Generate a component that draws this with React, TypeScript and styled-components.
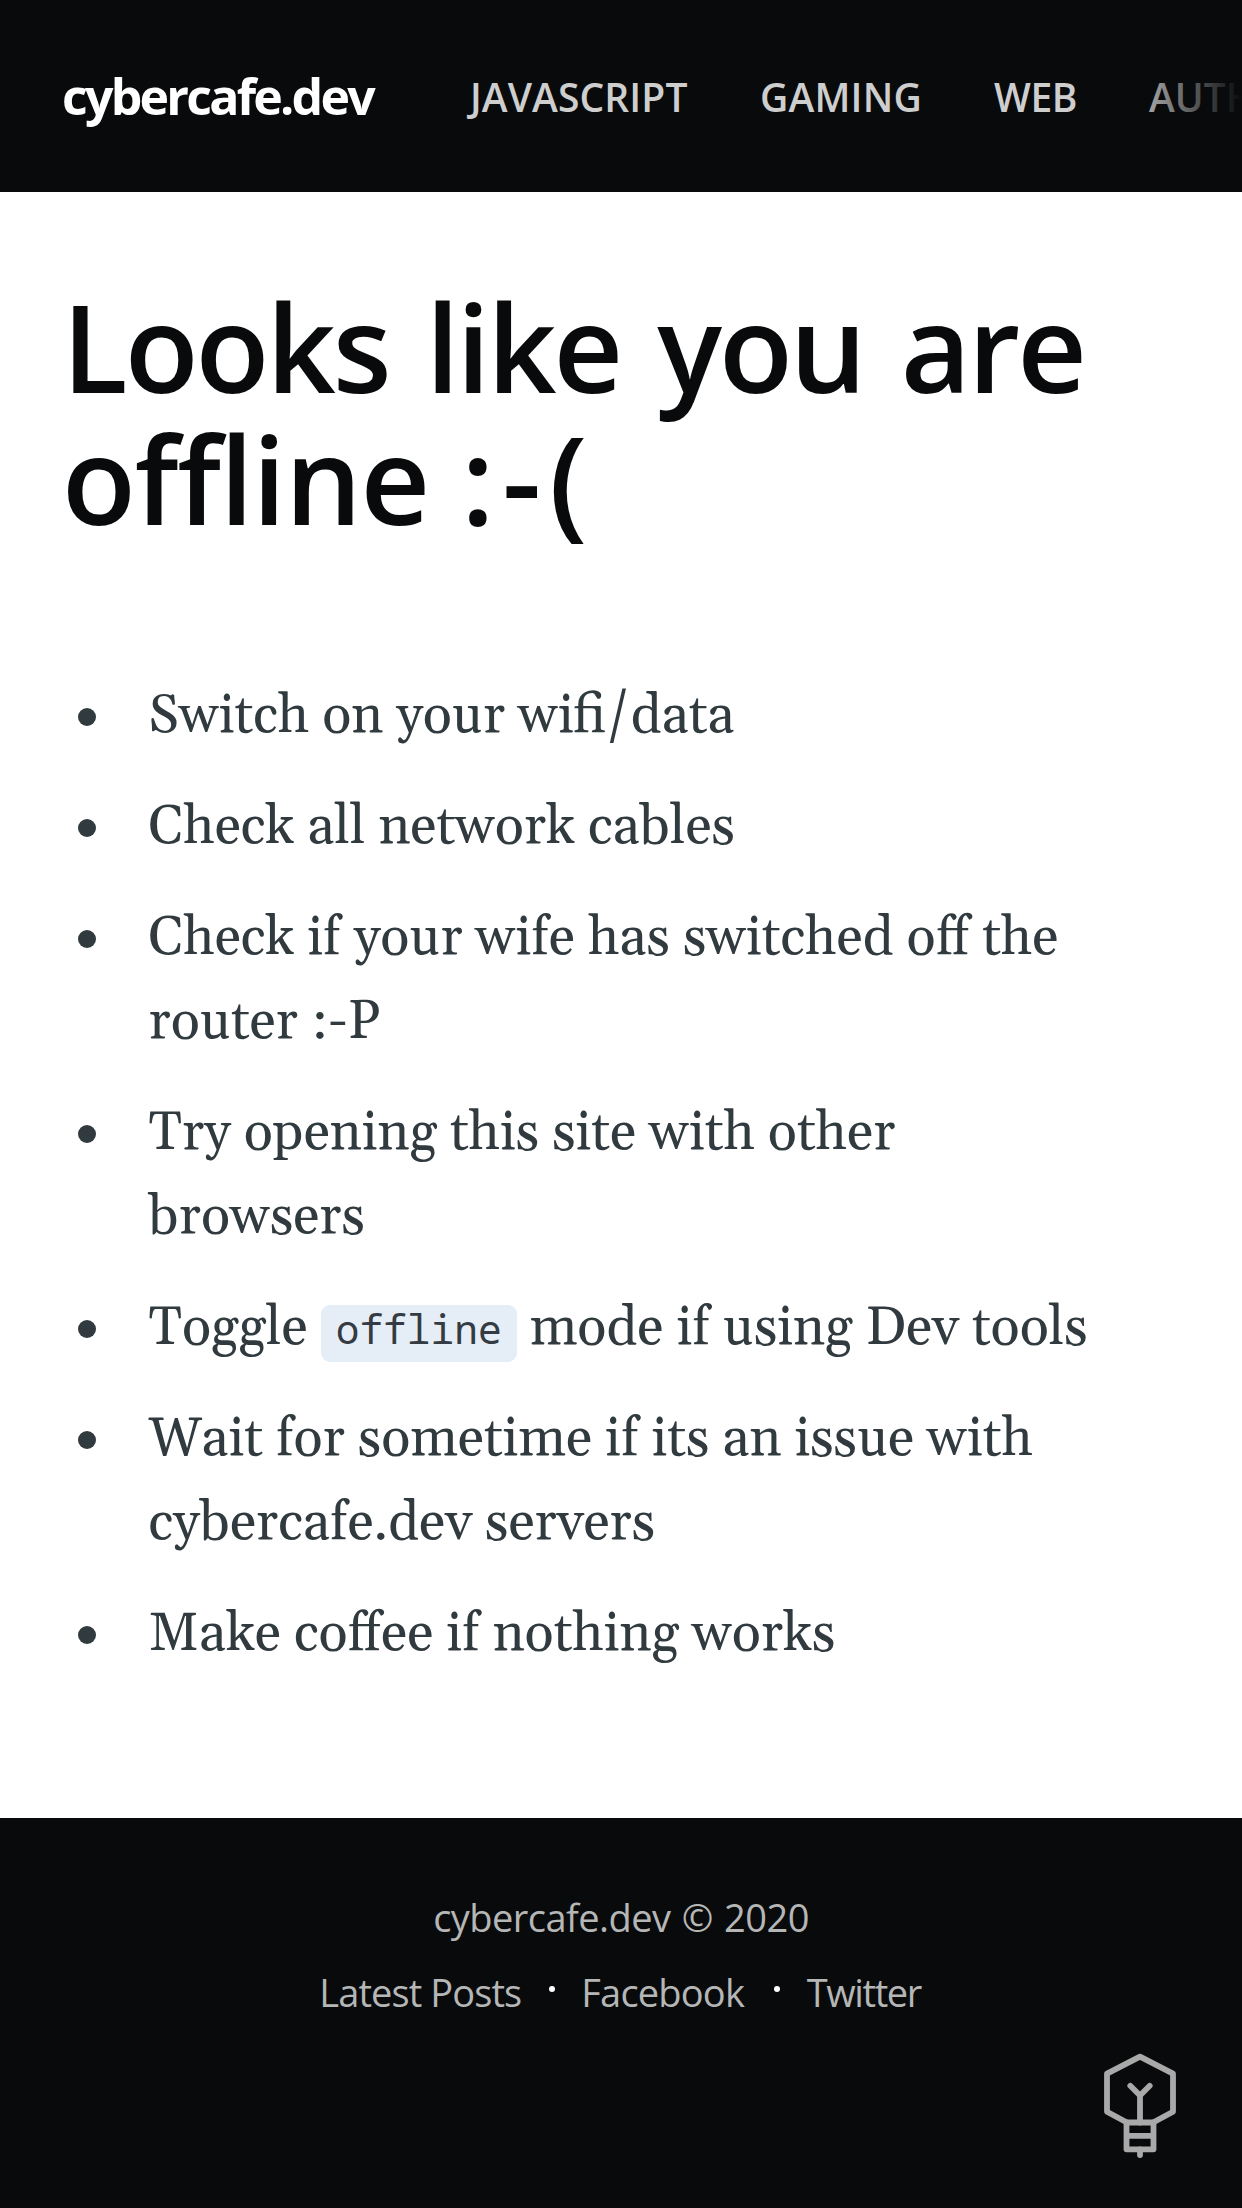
import React from "react";
import styled, { createGlobalStyle } from "styled-components";

const ink = "#090a0b";
const sans = `"Open Sans", "Noto Sans", sans-serif`;
const serif = `Gelasio, Georgia, "Liberation Serif", serif`;
const mono = `"Noto Sans Mono", "DejaVu Sans Mono", monospace`;

const GlobalStyle = createGlobalStyle`
  *, *::before, *::after { box-sizing: border-box; }
  html, body { margin: 0; padding: 0; background: #fff; }
  body { overflow: hidden; }
`;

const Page = styled.div`
  position: relative;
  display: flex;
  flex-direction: column;
  width: 1242px;
  height: 2208px;
  overflow: hidden;
  background: #fff;
  font-family: ${sans};
`;

const Header = styled.header`
  position: relative;
  display: flex;
  align-items: center;
  flex: 0 0 192px;
  padding: 0 0 0 62px;
  overflow: hidden;
  background: ${ink};

  &::after {
    content: "";
    position: absolute;
    top: 0;
    right: 0;
    width: 120px;
    height: 100%;
    background: linear-gradient(to right, rgba(9, 10, 11, 0), ${ink});
  }
`;

const Logo = styled.a`
  flex: 0 0 408px;
  color: #fff;
  font-size: 50px;
  font-weight: 700;
  line-height: 68px;
  letter-spacing: -2.75px;
`;

const Nav = styled.nav`
  display: grid;
  grid-template-columns: 290px 234px 155px auto;
  flex: none;
  padding-top: 1px;
`;

const NavLink = styled.a<{ $track: number }>`
  color: #cecece;
  font-size: 39px;
  font-weight: 650;
  line-height: 54px;
  letter-spacing: ${(p) => p.$track}px;
  text-transform: uppercase;
  white-space: nowrap;
`;

const Main = styled.main`
  flex: 0 0 1626px;
  padding: 88px 62px 0;
`;

const Title = styled.h1`
  margin: 0 0 130px;
  color: ${ink};
  font-size: 121px;
  font-weight: 600;
  line-height: 132px;
`;

const TitleLine = styled.span<{ $track: number; $word: number }>`
  display: block;
  letter-spacing: ${(p) => p.$track}px;
  word-spacing: ${(p) => p.$word}px;
  white-space: nowrap;
`;

const Emoticon = styled.span`
  letter-spacing: 7.8px;
`;

const List = styled.ul`
  display: flex;
  flex-direction: column;
  gap: 27px;
  margin: 0;
  padding: 0;
  list-style: none;
`;

const Item = styled.li`
  display: flex;
  align-items: flex-start;
  color: #313b3f;
  font-family: ${serif};
  font-size: 54px;
  line-height: 84px;

  &::before {
    content: "";
    flex: none;
    width: 18px;
    height: 18px;
    margin: 34px 52.6px 0 16px;
    border-radius: 50%;
    background: #313b3f;
  }
`;

const ItemText = styled.div`
  white-space: nowrap;
`;

const Code = styled.code`
  display: inline-block;
  padding: 0 15px 9px;
  border-radius: 9px;
  background: #e5eef6;
  color: #343b43;
  font-family: ${mono};
  font-size: 39.5px;
  line-height: 48px;
`;

const Footer = styled.footer`
  display: flex;
  flex-direction: column;
  align-items: center;
  flex: 1;
  padding-top: 73px;
  background: ${ink};
`;

const FooterText = styled.span<{ $track: number }>`
  color: #b5b6b6;
  font-size: 38px;
  font-weight: 440;
  line-height: 52px;
  letter-spacing: ${(p) => p.$track}px;
  white-space: nowrap;
`;

const Copyright = styled(FooterText)`
  word-spacing: 2px;
`;

const FooterNav = styled.nav`
  display: grid;
  grid-template-columns: 229.5px 32.5px 192.5px 33px 116px;
  align-items: center;
  margin-top: 23px;
`;

const Dot = styled.i`
  width: 6.5px;
  height: 6.5px;
  margin-bottom: 6px;
  border-radius: 50%;
  background: #fff;
`;

const Bulb = styled.svg`
  position: absolute;
  right: 32px;
  bottom: 28px;
  width: 130px;
  height: 150px;
  fill: none;
  stroke: #a9a9a9;
  stroke-width: 5.8;
  stroke-linecap: round;
  stroke-linejoin: round;
`;

const navItems: [string, number][] = [
  ["Javascript", 0.1],
  ["Gaming", 0.2],
  ["Web", -0.4],
  ["Author", 0],
];

const tips: React.ReactNode[] = [
  "Switch on your wifi/data",
  "Check all network cables",
  <>Check if your wife has switched off the<br />router :-P</>,
  <>Try opening this site with other<br />browsers</>,
  <>Toggle <Code>offline</Code> mode if using Dev tools</>,
  <>Wait for sometime if its an issue with<br />cybercafe.dev servers</>,
  "Make coffee if nothing works",
];

export default function App() {
  return (
    <Page>
      <GlobalStyle />
      <Header>
        <Logo>cybercafe.dev</Logo>
        <Nav>
          {navItems.map(([label, track]) => (
            <NavLink key={label} $track={track}>{label}</NavLink>
          ))}
        </Nav>
      </Header>
      <Main>
        <Title>
          <TitleLine $track={-3} $word={8.6}>Looks like you are</TitleLine>
          <TitleLine $track={-1.2} $word={2}>
            offline <Emoticon>:-(</Emoticon>
          </TitleLine>
        </Title>
        <List>
          {tips.map((tip, i) => (
            <Item key={i}>
              <ItemText>{tip}</ItemText>
            </Item>
          ))}
        </List>
      </Main>
      <Footer>
        <Copyright $track={-0.55}>cybercafe.dev © 2020</Copyright>
        <FooterNav>
          <FooterText $track={-0.9}>Latest Posts</FooterText>
          <Dot />
          <FooterText $track={-0.8}>Facebook</FooterText>
          <Dot />
          <FooterText $track={-1.4}>Twitter</FooterText>
        </FooterNav>
      </Footer>
      <Bulb viewBox="0 0 130 150" aria-hidden="true">
        <path d="M46.5 92.3 27 81.8V43.7L60 26.7 93 43.7V81.8L73.5 92.3" />
        <path d="M46.5 92.5H73.5V119.3H46.5ZM46.5 105.8H73.5" />
        <path d="M60 92.5V65.5M50.3 55.8 60 65.5 69.7 55.8M60 119.3V125" />
      </Bulb>
    </Page>
  );
}
